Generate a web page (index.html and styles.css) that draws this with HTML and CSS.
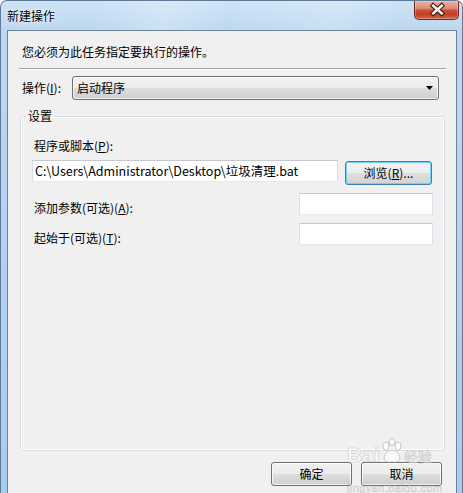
FILE: index.html
```html
<!DOCTYPE html>
<html lang="zh-CN">
<head>
<meta charset="utf-8">
<title>新建操作</title>
<link rel="stylesheet" href="styles.css">
</head>
<body>
<div class="window">
  <div class="titlebar">
    <span class="title">新建操作</span>
    <div class="close">
      <svg width="45" height="18" viewBox="0 0 45 18">
        <path d="M19 4.5 L28 12.5 M28 4.5 L19 12.5" stroke="#4a1e16" stroke-width="5" stroke-linecap="square" fill="none"/>
        <path d="M19 4.5 L28 12.5 M28 4.5 L19 12.5" stroke="#ffffff" stroke-width="2.6" stroke-linecap="square" fill="none"/>
      </svg>
    </div>
  </div>
  <div class="client">
    <div class="instruction">您必须为此任务指定要执行的操作。</div>
    <div class="sep"></div>
    <div class="action-row">
      <span class="action-label">操作(<u>I</u>):</span>
      <div class="select">
        <span>启动程序</span>
        <svg class="arrow" width="7" height="4" viewBox="0 0 7 4"><path d="M0 0 H7 L3.5 4 Z" fill="#000"/></svg>
      </div>
    </div>
    <fieldset class="group">
      <legend>设置</legend>
      <div class="group-body">
        <div class="field-label">程序或脚本(<u>P</u>):</div>
        <div class="prog-row">
          <div class="input prog">C:\Users\Administrator\Desktop\垃圾清理.bat</div>
          <div class="btn browse">浏览(<u>R</u>)...</div>
        </div>
        <div class="opt-row first">
          <span class="opt-label">添加参数(可选)(<u>A</u>):</span>
          <div class="input small"></div>
        </div>
        <div class="opt-row">
          <span class="opt-label">起始于(可选)(<u>T</u>):</span>
          <div class="input small"></div>
        </div>
      </div>
    </fieldset>
    <div class="buttons">
      <div class="btn">确定</div>
      <div class="btn">取消</div>
    </div>
  </div>
  <div class="watermark">
    <div class="wm-top">
      <span class="wm-bai">Bai</span>
      <svg class="wm-paw" width="22" height="26" viewBox="0 0 22 26">
        <g fill="rgba(255,255,255,0.7)" stroke="rgba(160,160,160,0.55)" stroke-width="1">
          <ellipse cx="5" cy="8" rx="3" ry="4"/>
          <ellipse cx="11" cy="4" rx="3" ry="3.5"/>
          <ellipse cx="17" cy="8" rx="3" ry="4"/>
          <path d="M3 20 Q4 13 11 12 Q18 13 19 20 Q19 25 11 24 Q3 25 3 20 Z"/>
        </g>
      </svg>
      <span class="wm-jy">经验</span>
    </div>
    <div class="wm-url">jingyan.baidu.com</div>
  </div>
</div>
</body>
</html>
```

FILE: styles.css
```css
html, body {
  margin: 0;
  padding: 0;
  background: #ffffff;
}

body {
  font-family: "Noto Sans CJK SC", "Noto Sans", sans-serif;
  font-size: 12px;
  color: #000;
}

.window {
  position: relative;
  width: 463px;
  height: 493px;
  box-sizing: border-box;
  border: 1px solid #5d7a98;
  border-bottom: none;
  border-radius: 7px 7px 0 0;
  overflow: hidden;
  display: flex;
  flex-direction: column;
  background:
    linear-gradient(100deg, rgba(255,255,255,0) 18%, rgba(255,255,255,0.22) 30%, rgba(255,255,255,0) 42%, rgba(255,255,255,0.18) 62%, rgba(255,255,255,0) 72%),
    linear-gradient(180deg, #cfe3f6 0, #bed8f1 28px, #a9cbec 100%);
}

.titlebar {
  height: 29px;
  flex: none;
  display: flex;
  align-items: flex-start;
  padding-left: 6px;
  box-sizing: border-box;
}

.title {
  margin-top: 7px;
  line-height: 16px;
  font-size: 12px;
  color: #000;
  text-shadow: 0 0 5px rgba(255,255,255,0.95), 0 0 2px rgba(255,255,255,0.9);
}

.close {
  margin-left: auto;
  margin-right: 3px;
  width: 45px;
  height: 19px;
  box-sizing: border-box;
  border: 1px solid #6b2a20;
  border-top: none;
  border-radius: 0 0 5px 5px;
  background: linear-gradient(180deg, #eab0a2 0, #de8f7c 40%, #cb4e35 52%, #c43f28 75%, #d46a4c 100%);
  box-shadow: inset 0 0 0 1px rgba(255,255,255,0.25);
  display: flex;
}

.client {
  margin-left: 6px;
  width: 450px;
  flex: 1;
  box-sizing: border-box;
  background: #f0f0f0;
  border: 1px solid #6f8396;
  border-bottom: none;
}

.instruction {
  padding: 13px 0 8px 14px;
  line-height: 16px;
}

.sep {
  margin: 0 10px 0 11px;
  border-top: 1px solid #a0a0a0;
  border-bottom: 1px solid #ffffff;
}

.action-row {
  display: flex;
  align-items: center;
  margin-top: 6px;
  padding-left: 14px;
}

.action-label {
  width: 50px;
  line-height: 16px;
}

.select {
  width: 367px;
  height: 24px;
  box-sizing: border-box;
  border: 1px solid #707070;
  border-radius: 3px;
  background: linear-gradient(180deg, #f2f2f2 0, #ebebeb 48%, #dddddd 52%, #cfcfcf 100%);
  box-shadow: inset 0 0 0 1px rgba(255,255,255,0.7);
  display: flex;
  align-items: center;
  padding: 0 5px 0 4px;
  line-height: 16px;
}

.select .arrow {
  margin-left: auto;
}

.group {
  margin: 8px 11px 0 12px;
  padding: 0;
  height: 343px;
  box-sizing: border-box;
  border: 1px solid #d5dfe5;
  border-radius: 3px;
  box-shadow: inset 0 0 0 1px #ffffff;
  min-inline-size: 0;
}

.group legend {
  margin-left: 5px;
  padding: 0 2px;
  line-height: 16px;
  font-size: 12px;
}

.group-body {
  padding: 14px 11px 0 11px;
}

.field-label {
  margin-left: 2px;
  line-height: 16px;
}

.prog-row {
  display: flex;
  align-items: flex-start;
  gap: 7px;
  margin-top: 6px;
}

.input {
  height: 22px;
  box-sizing: border-box;
  background: #ffffff;
  border: 1px solid #dbdfe6;
  border-top-color: #c5c9d1;
  border-bottom-color: #e3e9ef;
}

.input.prog {
  width: 306px;
  padding-left: 2px;
  line-height: 20px;
  font-size: 12.5px;
  white-space: nowrap;
  overflow: hidden;
}

.input.small {
  width: 134px;
}

.btn {
  width: 81px;
  height: 24px;
  box-sizing: border-box;
  border: 1px solid #707070;
  border-radius: 3px;
  background: linear-gradient(180deg, #f2f2f2 0, #ebebeb 48%, #dddddd 52%, #cfcfcf 100%);
  box-shadow: inset 0 0 0 1px rgba(255,255,255,0.75);
  display: flex;
  align-items: center;
  justify-content: center;
  line-height: 16px;
}

.btn.browse {
  width: 87px;
  margin-top: 1px;
  border-color: #3c7fb1;
  box-shadow: inset 0 0 0 1px #6fd2f8;
  background: linear-gradient(180deg, #f4f4f4 0, #ececec 48%, #dfdfdf 52%, #d3d3d3 100%);
}

.opt-row {
  display: flex;
  align-items: flex-start;
  justify-content: space-between;
  margin-top: 7px;
}

.opt-row.first {
  margin-top: 8px;
}

.opt-label {
  margin-left: 2px;
  padding-top: 7px;
  line-height: 16px;
}

.buttons {
  display: flex;
  justify-content: flex-end;
  gap: 9px;
  margin-top: 11px;
  padding-right: 14px;
}

.watermark {
  position: absolute;
  left: 346px;
  top: 435px;
  width: 90px;
  pointer-events: none;
  color: rgba(255,255,255,0.6);
  -webkit-text-stroke: 0.6px rgba(150,150,150,0.45);
  font-family: "Liberation Sans", sans-serif;
}

.wm-top {
  display: flex;
  align-items: flex-end;
  height: 30px;
}

.wm-bai {
  font-size: 21px;
  font-weight: bold;
  line-height: 22px;
}

.wm-paw {
  margin: 0 1px 2px 1px;
}

.wm-jy {
  font-family: "Noto Sans CJK SC", sans-serif;
  font-size: 14px;
  line-height: 18px;
  margin-bottom: 1px;
}

.wm-url {
  font-size: 11px;
  line-height: 12px;
  margin-top: 16px;
  letter-spacing: 0.4px;
}
```
